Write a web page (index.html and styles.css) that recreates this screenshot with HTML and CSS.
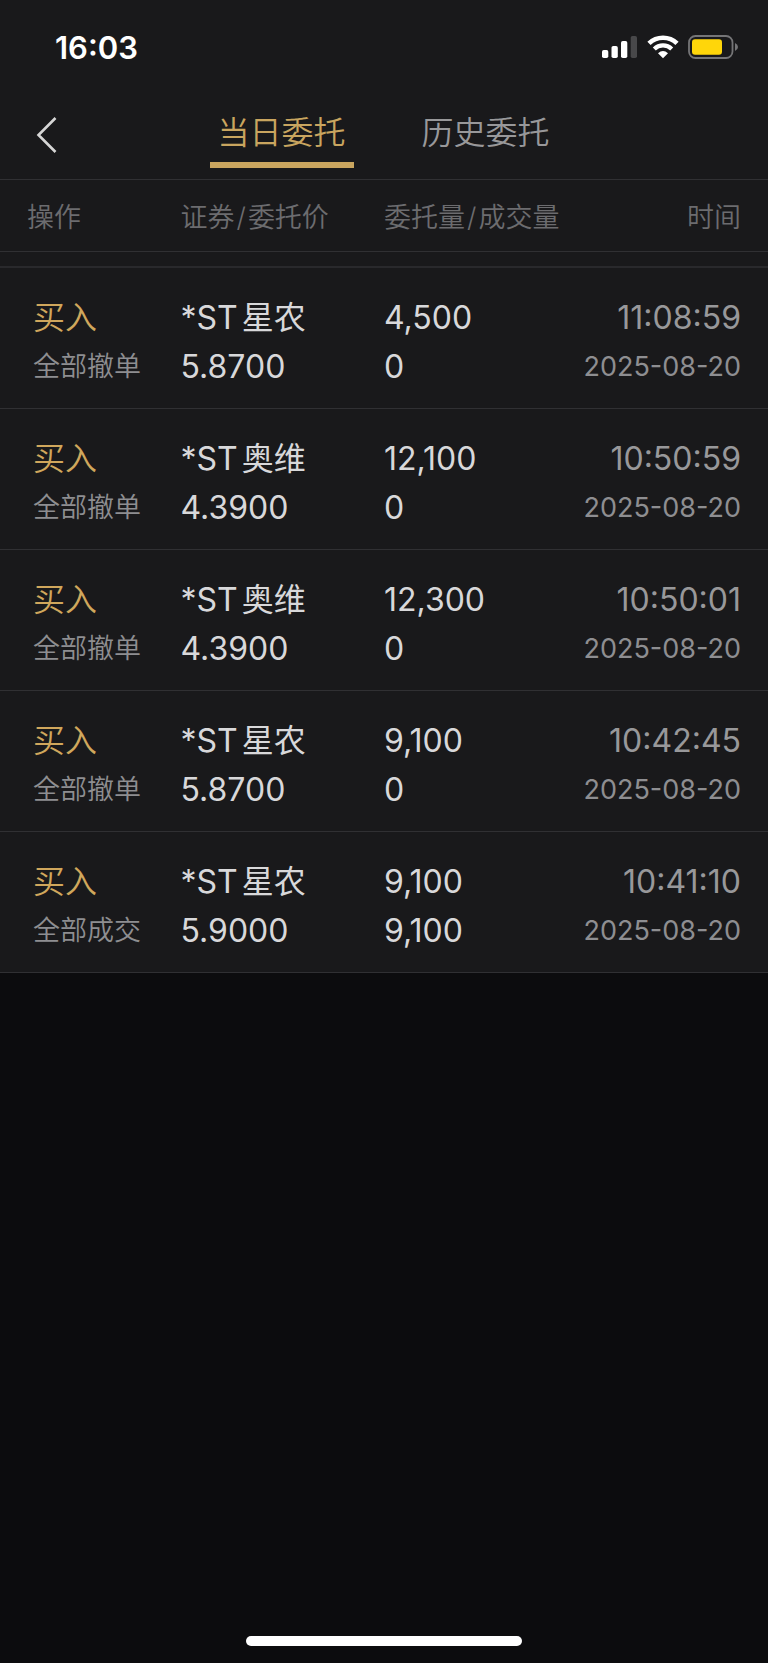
FILE: index.html
```html
<!DOCTYPE html>
<html lang="zh-CN">
<head>
    <meta charset="utf-8">
    <meta name="viewport" content="width=device-width, initial-scale=1.0">
    <title>当日委托</title>
    <link rel="stylesheet" href="styles.css">
</head>
<body>
    <header class="top">
        <div class="status-bar">
            <span class="clock">16:03</span>
            <div class="status-icons">
                <svg width="36" height="24" viewBox="0 0 36 24" fill="#fff" aria-hidden="true">
                    <rect x="0" y="15" width="6.3" height="8" rx="1.8"/>
                    <rect x="9.5" y="11" width="6.3" height="12" rx="1.8"/>
                    <rect x="19" y="6" width="6.3" height="17" rx="1.8"/>
                    <rect x="28.7" y="1" width="6.3" height="22" rx="1.8" fill="#48484a"/>
                </svg>
                <svg width="32" height="24" viewBox="0 0 32 24" fill="none" stroke="#fff" stroke-width="4.6" aria-hidden="true">
                    <path d="M2 8.4 A20 20 0 0 1 30 8.4"/>
                    <path d="M7.3 14 A12.3 12.3 0 0 1 24.7 14" stroke-width="4.2"/>
                    <path d="M16 23.2 L11 18.2 Q16 14 21 18.2 Z" fill="#fff" stroke="none"/>
                </svg>
                <svg width="50" height="24" viewBox="0 0 50 24" aria-hidden="true">
                    <rect x="1" y="1" width="43.5" height="22" rx="6.5" fill="none" stroke="#757577" stroke-width="1.8"/>
                    <rect x="4" y="4.2" width="30" height="15.6" rx="3" fill="#ffd60a"/>
                    <path d="M47 8 Q50 9.3 50 12 Q50 14.7 47 16 Z" fill="#757577"/>
                </svg>
            </div>
        </div>
        <nav class="nav">
            <button type="button" class="back" aria-label="返回">
                <svg width="22" height="36" viewBox="0 0 22 36" fill="none" stroke="#d6d6d6" stroke-width="2.6" aria-hidden="true">
                    <path d="M19.5 1 L2.5 18 L19.5 35"/>
                </svg>
            </button>
            <div class="tabs">
                <button type="button" class="tab active">当日委托</button>
                <button type="button" class="tab">历史委托</button>
            </div>
        </nav>
    </header>

    <table class="orders">
        <thead>
            <tr>
                <th class="col-action">操作</th>
                <th class="col-stock">证券<span class="slash">/</span>委托价</th>
                <th class="col-amount">委托量<span class="slash">/</span>成交量</th>
                <th class="col-time">时间</th>
            </tr>
        </thead>
        <tbody>
            <tr>
                <td class="col-action"><span class="buy">买入</span><span class="state">全部撤单</span></td>
                <td><span>*ST星农</span><span>5.8700</span></td>
                <td><span>4,500</span><span>0</span></td>
                <td class="col-time"><span>11:08:59</span><span class="date">2025-08-20</span></td>
            </tr>
            <tr>
                <td class="col-action"><span class="buy">买入</span><span class="state">全部撤单</span></td>
                <td><span>*ST奥维</span><span>4.3900</span></td>
                <td><span>12,100</span><span>0</span></td>
                <td class="col-time"><span>10:50:59</span><span class="date">2025-08-20</span></td>
            </tr>
            <tr>
                <td class="col-action"><span class="buy">买入</span><span class="state">全部撤单</span></td>
                <td><span>*ST奥维</span><span>4.3900</span></td>
                <td><span>12,300</span><span>0</span></td>
                <td class="col-time"><span>10:50:01</span><span class="date">2025-08-20</span></td>
            </tr>
            <tr>
                <td class="col-action"><span class="buy">买入</span><span class="state">全部撤单</span></td>
                <td><span>*ST星农</span><span>5.8700</span></td>
                <td><span>9,100</span><span>0</span></td>
                <td class="col-time"><span>10:42:45</span><span class="date">2025-08-20</span></td>
            </tr>
            <tr>
                <td class="col-action"><span class="buy">买入</span><span class="state">全部成交</span></td>
                <td><span>*ST星农</span><span>5.9000</span></td>
                <td><span>9,100</span><span>9,100</span></td>
                <td class="col-time"><span>10:41:10</span><span class="date">2025-08-20</span></td>
            </tr>
        </tbody>
    </table>

    <div class="home-indicator"></div>
</body>
</html>
```

FILE: styles.css
```css
* {
    box-sizing: border-box;
}

body {
    display: flex;
    flex-direction: column;
    min-height: 100vh;
    margin: 0;
    background-color: #0c0c0e;
    color: #d8d8da;
    font-family: Inter, "Noto Sans CJK SC", sans-serif;
    font-size: 32px;
    font-weight: 350;
    text-autospace: normal;
}

button {
    padding: 0;
    border: none;
    background: none;
    font: inherit;
    cursor: pointer;
}

svg {
    display: block;
}

.top {
    background-color: #19191b;
    border-bottom: 1px solid #303033;
}

/* status bar */
.status-bar {
    display: flex;
    justify-content: space-between;
    align-items: center;
    height: 94px;
    padding: 0 30px 0 55px;
}

.clock {
    color: #ffffff;
    font-size: 31px;
    font-weight: 600;
}

.status-icons {
    display: flex;
    gap: 9px;
}

/* navigation */
.nav {
    display: grid;
    grid-template-columns: 1fr auto 1fr;
    padding: 13px 0 11px;
}

.back {
    align-self: start;
    justify-self: start;
    padding: 10px 36px;
}

.tabs {
    display: flex;
    gap: 61px;
}

.tab {
    padding: 2px 8px 5px 7px;
    border-bottom: 6px solid transparent;
    color: #98989a;
    line-height: 48px;
}

.tab.active {
    border-color: #c9a55f;
    color: #c9a55f;
}

/* orders */
.orders {
    width: 100%;
    table-layout: fixed;
    border-spacing: 0;
    background-color: #19191b;
}

.orders th {
    height: 72px;
    padding: 0;
    border-bottom: 1px solid #303033;
    color: #6c6c6f;
    font-size: 27px;
    font-weight: 350;
    text-align: left;
    white-space: nowrap;
}

.orders .slash {
    margin: 0 2px;
}

.orders td {
    padding: 25px 0 17px;
    border-bottom: 1px solid #303033;
    font-weight: 400;
    white-space: nowrap;
}

.orders td span {
    display: block;
    height: 49px;
    line-height: 49px;
}

.orders tbody::before {
    content: "";
    display: block;
    height: 14px;
}

.orders tbody tr:first-child td {
    border-top: 2px solid #29292c;
}

.orders .col-action {
    width: 23.5%;
    padding-left: 27px;
}

.orders td.col-action {
    padding-left: 33px;
    font-weight: 350;
}

.orders .col-stock {
    width: 26.5%;
}

.orders .col-amount {
    width: 25%;
}

.orders .col-time {
    width: 25%;
    padding-right: 27px;
    text-align: right;
}

.orders td.col-time {
    color: #98989a;
}

.orders .buy {
    color: #d0a75c;
}

.orders .state,
.orders .date {
    color: #8e8e91;
    font-size: 27px;
}

.home-indicator {
    width: 36%;
    height: 10px;
    margin: auto auto 17px;
    border-radius: 5px;
    background-color: #ffffff;
}
```
